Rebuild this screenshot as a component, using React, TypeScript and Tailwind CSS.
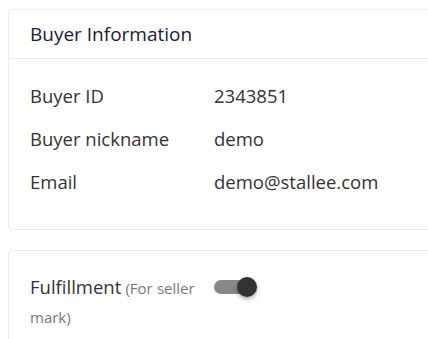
import React, { useState } from "react";

const rows = [
  { label: "Buyer ID", value: "2343851" },
  { label: "Buyer nickname", value: "demo" },
  { label: "Email", value: "demo@stallee.com" },
];

const App: React.FC = () => {
  const [fulfilled, setFulfilled] = useState(true);

  return (
    <div className="h-[339px] w-[428px] overflow-hidden bg-white pl-2 pt-[9px] font-['Open_Sans',sans-serif]">
      <div className="w-[460px]">
        {/* Buyer info card */}
        <section className="rounded border border-[#ebebeb] bg-white">
          <div className="flex h-[49px] items-center border-b border-[#ebebeb] px-[21px] text-[19px] text-[#1b2033]">
            Buyer Information
          </div>
          <div className="px-[21px] pb-[26px] pt-[15px]">
            {rows.map((r) => (
              <div key={r.label} className="flex h-[43px] items-center text-[18.5px] text-[#333]">
                <span className="w-[184px]">{r.label}</span>
                <span>{r.value}</span>
              </div>
            ))}
          </div>
        </section>

        {/* Fulfillment card */}
        <section className="mt-[20px] rounded border border-[#ebebeb] bg-white px-[21px] pt-[21px] pb-4">
          <div className="flex items-start">
            <div className="w-[184px] pr-4 leading-[29px]">
              <span className="text-[18.5px] text-[#333]">Fulfillment</span>{" "}
              {["(For", "seller", "mark)"].map((w) => (
                <React.Fragment key={w}>
                  <span className="text-[15px] text-[#777]">{w}</span>{" "}
                </React.Fragment>
              ))}
            </div>
            <button
              type="button"
              onClick={() => setFulfilled((v) => !v)}
              className="relative mt-[8px] h-[14px] w-[34px] rounded-full bg-[#888]"
            >
              <span
                className={`absolute top-[-3px] h-[20px] w-[20px] rounded-full bg-[#333] shadow-[0_2px_4px_rgba(0,0,0,0.35)] ${
                  fulfilled ? "left-[23px]" : "left-[-3px]"
                }`}
              />
            </button>
          </div>
        </section>
      </div>
    </div>
  );
};

export default App;
